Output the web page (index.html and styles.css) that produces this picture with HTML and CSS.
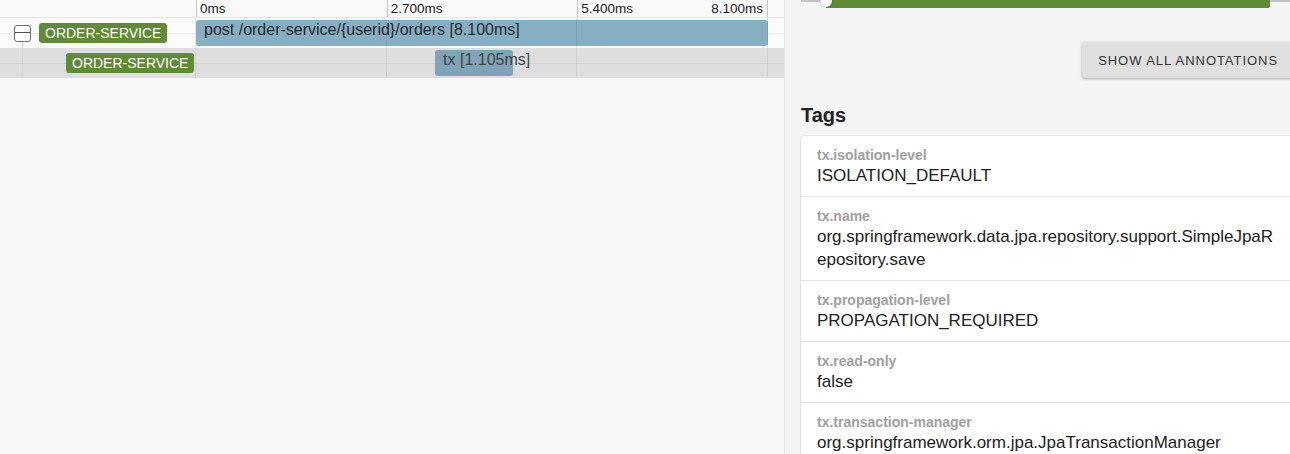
FILE: index.html
```html
<!DOCTYPE html>
<html lang="en">
  <head>
    <meta charset="UTF-8" />
    <meta name="viewport" content="width=device-width, initial-scale=1.0" />
    <title>Trace</title>
    <link rel="stylesheet" href="styles.css">
  </head>

  <body>
    <div class="page">
      <div class="trace">
        <div class="ticks">
          <div class="name-col"></div>
          <div class="scale">
            <span class="tick" style="left: 0%">0ms</span>
            <span class="tick" style="left: 33.333%">2.700ms</span>
            <span class="tick" style="left: 66.667%">5.400ms</span>
            <span class="tick tick-end">8.100ms</span>
          </div>
        </div>

        <div class="rows">
          <div class="gridlines">
            <i style="left: 0%"></i>
            <i style="left: 33.333%"></i>
            <i style="left: 66.667%"></i>
            <i style="left: 100%"></i>
          </div>

          <div class="row row-root">
            <div class="row-name">
              <span class="toggle"></span>
              <span class="service">ORDER-SERVICE</span>
            </div>
            <div class="row-bars">
              <div class="span" style="left: 0%; width: 100%">post /order-service/{userid}/orders [8.100ms]</div>
            </div>
          </div>

          <div class="row row-child">
            <div class="row-name">
              <span class="service">ORDER-SERVICE</span>
            </div>
            <div class="row-bars">
              <div class="span span-child" style="left: 41.8%; width: 13.64%">tx [1.105ms]</div>
            </div>
          </div>
        </div>
      </div>

      <div class="detail">
        <div class="detail-inner">
          <div class="slider">
            <div class="slider-rail"></div>
            <div class="slider-track"></div>
            <div class="slider-thumb"></div>
          </div>

          <div class="actions">
            <button class="annotations-btn">Show all annotations</button>
          </div>

          <h3>Tags</h3>

          <div class="tags">
            <div class="tag">
              <div class="tag-key">tx.isolation-level</div>
              <div class="tag-value">ISOLATION_DEFAULT</div>
            </div>
            <div class="tag">
              <div class="tag-key">tx.name</div>
              <div class="tag-value">org.springframework.data.jpa.repository.support.SimpleJpaRepository.save</div>
            </div>
            <div class="tag">
              <div class="tag-key">tx.propagation-level</div>
              <div class="tag-value">PROPAGATION_REQUIRED</div>
            </div>
            <div class="tag">
              <div class="tag-key">tx.read-only</div>
              <div class="tag-value">false</div>
            </div>
            <div class="tag">
              <div class="tag-key">tx.transaction-manager</div>
              <div class="tag-value">org.springframework.orm.jpa.JpaTransactionManager</div>
            </div>
          </div>
        </div>
      </div>
    </div>
  </body>
</html>
```

FILE: styles.css
```css
body {
  font-family: "Liberation Sans", Arial, sans-serif;
  margin: 0;
  padding: 0;
  color: #222;
  overflow: hidden;
}

.page {
  display: flex;
  height: 454px;
}

/* left: timeline */

.trace {
  flex: none;
  width: 784px;
  background-color: #f8f8f8;
  border-right: 1px solid #e2e2e2;
}

.ticks {
  display: flex;
  height: 17px;
  border-bottom: 1px solid #e4e4e4;
  background-color: #f9f9f9;
}

.name-col {
  flex: none;
  width: 196px;
}

.scale {
  position: relative;
  width: 572px;
}

.tick {
  position: absolute;
  top: 0;
  height: 17px;
  padding-left: 3px;
  border-left: 1px solid #c6c6c6;
  font-size: 13.5px;
  line-height: 18px;
}

.tick-end {
  right: 0;
  padding-left: 0;
  padding-right: 4px;
  border-left: none;
  border-right: 1px solid #c6c6c6;
}

.rows {
  position: relative;
}

.gridlines {
  position: absolute;
  top: 0;
  bottom: 0;
  left: 196px;
  width: 572px;
  z-index: 1;
  pointer-events: none;
}

.gridlines i {
  position: absolute;
  top: 0;
  bottom: 0;
  width: 1px;
  margin-left: -1px;
  background-color: rgba(0, 0, 0, 0.07);
}

.row {
  position: relative;
  display: flex;
  height: 30px;
  background-color: #fbfbfb;
}

.row::before {
  content: "";
  position: absolute;
  left: 0;
  right: 0;
  top: 15px;
  height: 1px;
  background-color: rgba(0, 0, 0, 0.05);
}

.row-child {
  background-color: #dedede;
}

.row-name {
  position: relative;
  flex: none;
  width: 196px;
  display: flex;
  align-items: center;
  box-sizing: border-box;
}

.row-root .row-name {
  padding-left: 14px;
}

.row-root .row-name::after {
  content: "";
  position: absolute;
  left: 22px;
  top: 23px;
  bottom: 0;
  width: 1px;
  background-color: #d0d0d0;
}

.row-child .row-name {
  padding-left: 66px;
}

.row-child .row-name::before {
  content: "";
  position: absolute;
  left: 22px;
  top: 0;
  bottom: 0;
  width: 1px;
  background-color: #d0d0d0;
}

.toggle {
  position: relative;
  z-index: 2;
  width: 17px;
  height: 17px;
  margin-right: 8px;
  box-sizing: border-box;
  border: 1.5px solid #707070;
  border-radius: 3px;
  background-color: #ffffff;
}

.toggle::after {
  content: "";
  position: absolute;
  left: 0;
  right: 0;
  top: 6px;
  height: 1.5px;
  background-color: #505050;
}

.service {
  position: relative;
  z-index: 2;
  height: 20px;
  padding: 0 6px;
  background-color: #5f8b35;
  color: #ffffff;
  border-radius: 3px;
  font-size: 14px;
  line-height: 20px;
}

.row-bars {
  position: relative;
  width: 572px;
}

.span {
  position: absolute;
  top: 2px;
  height: 26px;
  box-sizing: border-box;
  padding-left: 8px;
  background-color: #88aec2;
  border-radius: 3px;
  font-size: 16px;
  line-height: 20px;
  white-space: nowrap;
  color: #1f2a30;
}

.span-child {
  background-color: #80a3b5;
  color: #3b454b;
}

/* right: span details */

.detail {
  flex: none;
  width: 505px;
  background-color: #f4f4f4;
  overflow: hidden;
}

.detail-inner {
  width: 493px;
  padding-left: 16px;
}

.slider {
  position: relative;
  height: 8px;
}

.slider-rail {
  position: absolute;
  top: 0;
  left: 0;
  right: -20px;
  height: 2px;
  background-color: #c4c4c4;
}

.slider-track {
  position: absolute;
  top: 0;
  left: 25px;
  width: 444px;
  height: 8px;
  background-color: #5f8b35;
  border-bottom-right-radius: 2px;
}

.slider-thumb {
  position: absolute;
  top: -5px;
  left: 19px;
  width: 12px;
  height: 12px;
  border-radius: 50%;
  background-color: #ffffff;
  box-shadow: 0 0 1px rgba(0, 0, 0, 0.5);
}

.actions {
  display: flex;
  justify-content: flex-end;
  margin-top: 34px;
}

.annotations-btn {
  height: 36px;
  padding: 0 16px;
  background-color: #e0e0e0;
  color: #333;
  border: none;
  border-radius: 4px;
  box-shadow: 0 1px 3px rgba(0, 0, 0, 0.3);
  font-family: inherit;
  font-size: 13px;
  letter-spacing: 0.95px;
  text-transform: uppercase;
  cursor: pointer;
}

h3 {
  margin: 25px 0 9px;
  font-size: 20px;
  line-height: 24px;
  color: #212121;
}

.tags {
  background-color: #ffffff;
  border-top-left-radius: 4px;
  box-shadow: 0 0 0 1px rgba(0, 0, 0, 0.05), 0 1px 2px rgba(0, 0, 0, 0.08);
}

.tag {
  padding: 10px 16px 9px;
  border-bottom: 1px solid #e6e6e6;
}

.tag-key {
  font-size: 14px;
  font-weight: bold;
  line-height: 18px;
  color: #a0a0a0;
}

.tag-value {
  font-size: 17px;
  line-height: 23px;
  color: #222;
  word-break: break-all;
}
```
